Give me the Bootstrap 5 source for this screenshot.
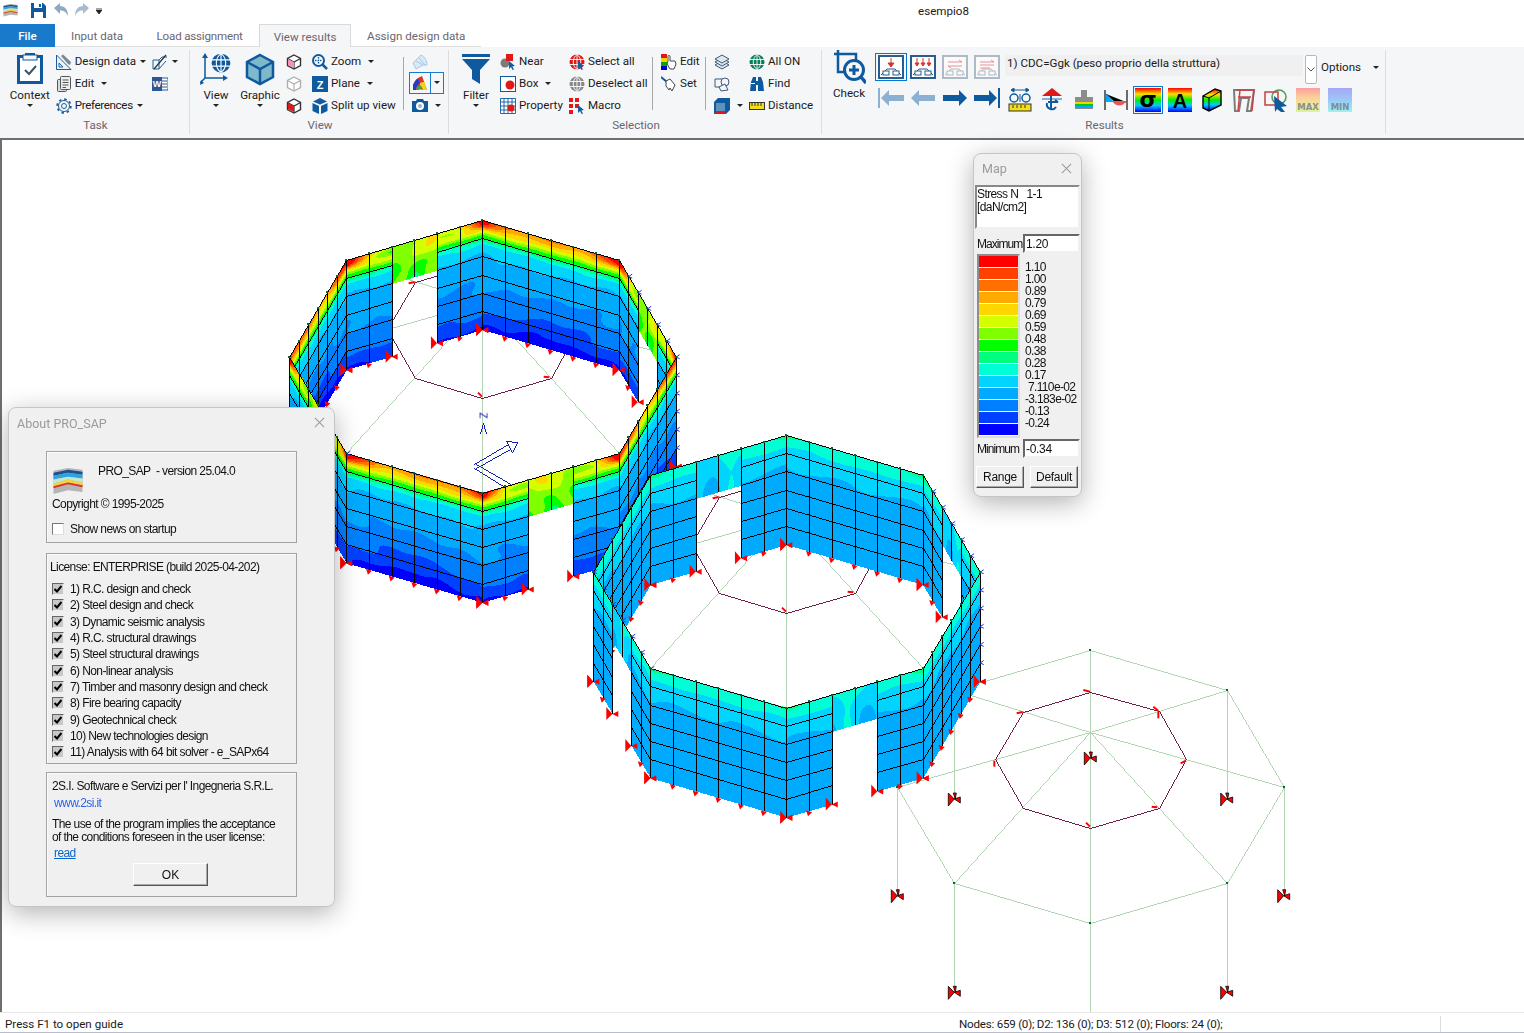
<!DOCTYPE html>
<html lang="en"><head><meta charset="utf-8"><title>esempio8</title>
<link rel="stylesheet" href="https://cdn.jsdelivr.net/npm/bootstrap@5.3.0/dist/css/bootstrap.min.css">
<style>
html,body{height:1033px;overflow:hidden;background:#fff}
body{font-family:Roboto,"Liberation Sans",sans-serif;font-size:11.6px;color:#1a1a1a;line-height:1.2}
svg{display:block;flex-shrink:0}
.app-shell{width:1524px;height:1033px}
.ttl{height:24px}.ttl svg{margin-top:3px}
.ttl-name{left:918px;top:5px}
.qa1{margin-left:3px}.qa2{margin-left:13px}.qa3{margin-left:8px}.qa4{margin-left:7px}.qa5{margin-left:7px}
.qa-d{margin-top:8px!important}
.tabs{height:23px}
.tabx{color:#6d6570;padding:0 16px;border-bottom:1px solid #dfdfdf;line-height:24px}
.tabx.filex{background:#1979ca;color:#fff;width:55px;text-align:center;padding:0;font-weight:500;border:0}
.tabx.activex{background:#f5f6f7;border:1px solid #d8d9da;border-bottom:0;padding:0 13.5px 0 14px}
.tab-i{padding-right:17.5px}
.tab-t{letter-spacing:-.2px}
.ribbon{height:91px;background:#f5f6f7;border-bottom:2px solid #6f6f6f;box-sizing:content-box}
.ribbon .grp{border-right:1px solid #dcdddf;margin:3px 0 4px;height:84px}
.g-task{width:190px}.g-view{width:259px}.g-sel{width:373px}.g-res{width:564px}
.rb{height:66px}
.rl{height:18px;line-height:18px;text-align:center;color:#6d6570;padding-left:2px}
.bigb{display:flex;flex-direction:column;align-items:center}
.bigb>svg{margin-top:2px}
.bigb .cap{height:18px;line-height:18px}
.col-s{display:flex;flex-direction:column}
.it{height:22px;display:flex;align-items:center;gap:3px;white-space:nowrap;padding-top:1px}
.tght{letter-spacing:-.35px}
.car{display:inline-block;width:0;height:0;border-left:3px solid transparent;border-right:3px solid transparent;border-top:3px solid #222;flex-shrink:0}
.it .car{margin-left:1px}
.vs{width:1px;background:#a9a9a9;height:53px;margin-top:7px}
.t1{width:52px;margin-left:4px}.t2{width:97px}.t3{width:37px}
.v1{width:44px;margin-left:4px}.v2{width:44px}.v3{margin-left:4px;width:16px}.v4{margin-left:10px;width:91px}.v5{margin-left:5px}
.s1{width:44px;margin-left:5px}.s2{width:69px;margin-left:2px}.s3{width:83px}.s4{width:44px;margin-left:8px}.s5{width:35px;margin-left:8px}.s6{width:70px}
.r1{width:40px;margin-left:7px}.r1 svg{margin-top:0}.r2{margin-left:6px;width:124px}
.r2x{display:grid;grid-template-columns:repeat(4,32px);grid-template-rows:33px 30px;align-items:center;justify-items:center}
.r3{margin-left:6px;width:380px}
.cbrow{height:38px}
.cbx{width:298px;height:21px;background:#f0f0f0;margin-top:5px;padding-left:2px;line-height:17px;flex-shrink:0;white-space:nowrap}
.cbd{width:12px;height:29px;margin:5px 0 0 2px;background:#fff;border:1px solid #b8b8b8;border-radius:2px;flex-shrink:0}
.opt{margin:11px 0 0 4px;white-space:nowrap}
.opt .car{margin-left:12px;vertical-align:2px}
.toolsx{display:grid;grid-template-columns:repeat(11,32px);justify-items:center;margin-left:-1px}
.sel-b{outline:1px solid #0078d7;outline-offset:1px}
.pickb{border:1px solid #1979ca;height:22px;width:35px;display:flex;align-items:center}
.pickb svg{margin-left:2px}.pickb i{display:block;border-left:1px solid #1979ca;height:20px;margin-left:2px;width:14px;position:relative}
.pickb .car{position:absolute;left:3px;top:8px}
.ml3x{margin-left:3px}
.it .carw{margin-left:4px}
.work{height:872px;border-left:2px solid #6f6f6f}
#plot{display:block}
.zmark{left:478px;top:270px;font:10px "Liberation Sans",sans-serif;color:#00a;transform:rotate(90deg)}
.stat{height:21px;border-top:1px solid #e8e8e8;padding-left:5px;line-height:22px;border-bottom:1px solid #b9bccb}
.stat-l{width:954px}
.stat-n{letter-spacing:-.23px}
.stat-d{left:1440px;top:3px;width:1px;height:16px;background:#dcdcdc}
.dlg{background:#f0f0f0;border:1px solid #c5c5c5;border-radius:8px;box-shadow:0 6px 26px rgba(0,0,0,.3);font-family:"Liberation Sans",sans-serif;font-size:12px;line-height:14px;color:#111;letter-spacing:-.6px;white-space:nowrap}
.dlg-ttl{color:#9a9a9a;font-family:Roboto,sans-serif;letter-spacing:0}
.dlg-x{right:9px;top:9px}
.about{left:6px;top:267px;width:327px;height:500px;padding:43px 0 0 37px}
.about .dlg-ttl{left:8px;top:9px;font-size:12.5px}
.gbx{width:251px;border:1px solid #a3a3a3;box-shadow:inset 1px 1px 0 #fbfbfb;padding-left:5px}
.gb1{height:92px;padding-top:14px}.gb2{height:211px;margin-top:10px;padding:6px 0 0 3px}.gb3{height:125px;margin-top:8px;padding-top:6px}
.ab-row{height:29px}.ab-ver{margin:-2px 0 0 14px}.mt2x{margin-top:2px}
.news{margin-top:11px;display:flex;align-items:center;gap:6px}
.bxck{width:12px;height:12px;background:#fff;border:1px solid;border-color:#777 #ddd #ddd #777}
.lrows{margin-top:7px;margin-left:2px}
.lrow{height:16.3px;display:flex;align-items:center;gap:6px}
.ckg{width:12px;height:12px;background:#c8c8c8;border:1px solid;border-color:#666 #eee #eee #666;position:relative}
.ckg svg{position:absolute;left:1px;top:1px}
.lnk{color:#2b62e0;margin-left:2px;margin-top:3px}.lnk2{color:#0a66cc;text-decoration:underline;margin-left:2px}
.mt7x{margin-top:8px;line-height:13px}
.okb{display:block;width:75px;height:23px;margin:3px 0 0 81px;padding:0;font:12px/20px "Liberation Sans",sans-serif;color:#111;background:#f0f0f0;border:1px solid;border-color:#fff #555 #555 #fff;box-shadow:inset -1px -1px 0 #aaa;border-radius:0;text-align:center}
.okb:hover{background:#f0f0f0;color:#111;border-color:#fff #555 #555 #fff}
.mapd{left:971px;top:13px;width:109px;height:344px;padding:31px 0 0 1px}
.mapd .dlg-ttl{left:8px;top:8px;font-size:12.5px}
.stress{width:105px;height:44px;background:#fff;border:2px solid;border-color:#888 #f0f0f0 #f0f0f0 #888;padding:1px 0 0 0;line-height:13px}
.mrow{display:flex;align-items:center;height:19px;margin-top:5px;padding-left:2px}
.mrow label{width:46px;letter-spacing:-.95px}
.minput{width:57px;height:19px;background:#fff;border:2px solid;border-color:#666 #f0f0f0 #f0f0f0 #666;border-radius:0;padding:0 0 0 1px;font:12px/15px "Liberation Sans",sans-serif;color:#111;box-shadow:none;letter-spacing:-.3px}
.legendx{height:184px;margin-top:1px;padding-left:2px}
.lbar{width:43px;height:184px;border:2px solid #8d8d8d;border-right-color:#ddd;border-bottom-color:#ddd;background:#fff}
.swt{height:12px;border-bottom:1px solid #fff}
.sw1{background:#f00}.sw2{background:#ff4000}.sw3{background:#ff7000}.sw4{background:#ffaa00}.sw5{background:#ffd700}.sw6{background:#d4ff00}.sw7{background:#7fff00}.sw8{background:#0f0}.sw9{background:#00ff7f}.sw10{background:#00ffd4}.sw11{background:#00d4ff}.sw12{background:#0af}.sw13{background:#0080ff}.sw14{background:#0040ff}.sw15{background:#00f}
.lvals{margin-left:5px;padding-top:7px;line-height:12px;letter-spacing:-.65px}
.ind3{padding-left:3px}
.mbtns{margin-top:8px;padding-left:1px;gap:6px}
.mbtn{display:block;width:48px;height:22px;padding:0;font:12px/18px "Liberation Sans",sans-serif;color:#111;background:#f0f0f0;border:1px solid;border-color:#fff #555 #555 #fff;box-shadow:inset -1px -1px 0 #aaa;border-radius:0;letter-spacing:-.3px}
.m2x{margin-top:1px}
</style></head>
<body>
<svg width="0" height="0" class="position-absolute">
<defs>
<linearGradient id="rb" x1="0" y1="0" x2="0" y2="1"><stop offset="0" stop-color="#f00"/><stop offset=".25" stop-color="#fd0"/><stop offset=".5" stop-color="#0e0"/><stop offset=".72" stop-color="#0cf"/><stop offset="1" stop-color="#00f"/></linearGradient>
<linearGradient id="mx" x1="0" y1="0" x2="0" y2="1"><stop offset="0" stop-color="#f9a0a0"/><stop offset=".4" stop-color="#fbd09a"/><stop offset=".7" stop-color="#eee79c"/><stop offset="1" stop-color="#d6f59a"/></linearGradient>
<linearGradient id="mn" x1="0" y1="0" x2="0" y2="1"><stop offset="0" stop-color="#a7a7f8"/><stop offset=".5" stop-color="#9cc7f6"/><stop offset="1" stop-color="#9cf3ec"/></linearGradient>
<symbol id="logo" viewBox="0 0 32 30"><path d="M1 5 16 2 31 4V27L16 25 1 29z" fill="#b5b5b5"/><path d="M1 7 16 4 31 6V9L16 7 1 10z" fill="#1d4f94"/><path d="M1 10 16 7 31 9V13L16 11 1 14z" fill="#2ea3dc"/><path d="M1 14 16 11 31 13V17L16 14 1 18z" fill="#bfe6d8"/><path d="M1 18 16 14 31 17V20L16 17 1 21z" fill="#f6d33c"/><path d="M1 21 16 17 31 20V22L16 19 1 23z" fill="#d9342a"/></symbol>
<symbol id="glasses" viewBox="0 0 26 24"><rect x="1" y="1" width="24" height="22" fill="#fff" stroke="currentColor" stroke-width="2"/><path d="M3 20 9 14H17L23 20" fill="none" stroke="currentColor"/><rect x="5" y="16" width="6" height="4" fill="#fff" stroke="currentColor"/><rect x="15" y="16" width="6" height="4" fill="#fff" stroke="currentColor"/></symbol>
<symbol id="cube" viewBox="0 0 16 16"><path d="M8 1 14.5 4.5V11.5L8 15 1.5 11.5V4.5z" fill="#fff" stroke="currentColor" stroke-width="1.4"/><path d="M1.5 4.5 8 8 14.5 4.5M8 8V15" fill="none" stroke="currentColor" stroke-width="1.2"/></symbol>
<symbol id="globe" viewBox="0 0 16 16"><circle cx="8" cy="8" r="7.5" fill="currentColor"/><path d="M.5 5.5H15.5M.5 10.5H15.5M8 .5V15.5M8 .5C3 4 3 12 8 15.5M8 .5C13 4 13 12 8 15.5" fill="none" stroke="#fff" stroke-width=".9"/></symbol>
<symbol id="cursor" viewBox="0 0 16 16"><path d="M9 7 15 12 12.3 12.5 14 15.4 12.6 16 11 13 9 15z" fill="#135c9e"/></symbol>
<symbol id="ck" viewBox="0 0 8 8"><path d="M.5 4 3 6.5 7.5 1" fill="none" stroke="#000" stroke-width="2"/></symbol>
<symbol id="xx" viewBox="0 0 12 12"><path d="M1 1 11 11M11 1 1 11" stroke="#9a9a9a" stroke-width="1.1"/></symbol>
</defs></svg>
<div class="app-shell d-flex flex-column">
 <div class="ttl d-flex position-relative">
  <svg class="qa1" width="15" height="14"><use href="#logo"/></svg>
  <svg class="qa2" width="15" height="15" viewBox="0 0 15 15"><path d="M0 0H12L15 3V15H0z" fill="#0f5a9e"/><rect x="3" y="0" width="8" height="5" fill="#fff"/><rect x="8" y="1" width="2" height="3" fill="#0f5a9e"/><rect x="3" y="9" width="9" height="6" fill="#fff"/></svg>
  <svg class="qa3" width="14" height="14" viewBox="0 0 14 14"><path d="M0 5 6 0V3C11 3 14 7 14 13 12 9 10 7.500 6 7.500V11z" fill="#8fa9c4"/></svg>
  <svg class="qa4" width="14" height="14" viewBox="0 0 14 14"><path d="M14 5 8 0V3C3 3 0 7 0 13 2 9 4 7.500 8 7.500V11z" fill="#a9bccf"/></svg>
  <svg class="qa5 qa-d" width="6" height="6" viewBox="0 0 6 6"><path d="M0 0H6M0 2H6L3 6z" stroke="#222" stroke-width=".8" fill="#222"/></svg>
  <span class="ttl-name position-absolute">esempio8</span>
 </div>
 <div class="tabs d-flex">
  <div class="tabx filex">File</div><div class="tabx tab-i">Input data</div><div class="tabx tab-t">Load assignment</div><div class="tabx activex">View results</div><div class="tabx">Assign design data</div>
 </div>
 <div class="ribbon d-flex">
  <!-- TASK -->
  <div class="grp g-task">
   <div class="rb d-flex">
    <div class="bigb t1"><svg width="30" height="34" viewBox="0 0 30 34"><path d="M10 3V1H20V3H28V32H2V3z" fill="#0f5a9e"/><rect x="5" y="6" width="20" height="23" fill="#fff"/><rect x="8" y="3" width="14" height="5" fill="#f5f6f7" stroke="#0f5a9e"/><path d="M10 18 14 22 21 14" fill="none" stroke="#3a5568" stroke-width="2"/></svg><span class="cap">Context</span><i class="car"></i></div>
    <div class="col-s t2">
     <div class="it"><svg width="16" height="16" viewBox="0 0 16 16"><path d="M.5 1V15.500H15z" fill="#eef2f6" stroke="#1b5e9b"/><path d="M3 9V13H7z" fill="#f5f6f7" stroke="#1b5e9b"/><path d="M5 2 7 .5 15 8 14 11 12 10z" fill="#7b8792"/></svg>Design data<i class="car"></i></div>
     <div class="it"><svg width="16" height="16" viewBox="0 0 16 16"><rect x="1.500" y="3.500" width="9" height="12" rx="1" fill="#d8dcdf" stroke="#555"/><rect x="4.500" y=".5" width="10" height="13" rx="1" fill="#eee" stroke="#555"/><path d="M6.500 4H12.500M6.500 6.500H12.500M6.500 9H12.500M6.500 11.500H10" stroke="#555"/></svg>Edit<i class="car carw"></i></div>
     <div class="it tght"><svg width="16" height="16" viewBox="0 0 16 16"><circle cx="8" cy="8" r="5.500" fill="none" stroke="#1b5e9b"/><circle cx="8" cy="8" r="6.800" fill="none" stroke="#1b5e9b" stroke-width="1.800" stroke-dasharray="2.500 2.840"/><circle cx="8" cy="8" r="2.500" fill="none" stroke="#1b5e9b"/></svg>Preferences<i class="car"></i></div>
    </div>
    <div class="col-s t3">
     <div class="it"><svg width="16" height="16" viewBox="0 0 16 16"><path d="M1 6H7V15H1zM7 6 10 3H15M7 15 14 7" fill="none" stroke="#1b5e9b"/><path d="M2 15 14 1" stroke="#333" stroke-width="1.300"/></svg><i class="car ml3x"></i></div>
     <div class="it"><svg width="16" height="16" viewBox="0 0 16 16"><rect x="8" y="2" width="8" height="12" fill="#fff" stroke="#2b5797"/><path d="M10 5H15M10 8H15M10 11H15" stroke="#2b5797"/><rect y="1" width="10" height="14" fill="#2b5797"/><text x="5" y="11" text-anchor="middle" font-size="9" font-weight="700" fill="#fff" font-family="Liberation Sans">W</text></svg></div>
    </div>
   </div>
   <div class="rl">Task</div>
  </div>
  <!-- VIEW -->
  <div class="grp g-view">
   <div class="rb d-flex">
    <div class="bigb v1"><svg width="32" height="34" viewBox="0 0 32 34"><path d="M5 26V4M5 26H26M5 26 0 31" fill="none" stroke="#0f5a9e" stroke-width="1.500"/><path d="M5 1 8 6H2zM28 26 23 23V29zM0 33 1 28 4 31z" fill="#0f5a9e"/><svg x="11" y="1" width="20" height="20" viewBox="0 0 16 16" color="#0f5a9e"><use href="#globe"/></svg></svg><span class="cap">View</span><i class="car"></i></div>
    <div class="bigb v2"><svg width="30" height="34" viewBox="0 0 30 34"><path d="M15 3 28 10V25L15 32 2 25V10z" fill="#7fb8ca" stroke="#0f5a9e" stroke-width="2.500"/><path d="M2 10 15 17 28 10M15 17V32" fill="none" stroke="#0f5a9e" stroke-width="2.500"/></svg><span class="cap">Graphic</span><i class="car"></i></div>
    <div class="col-s v3">
     <div class="it"><svg width="16" height="16" viewBox="0 0 16 16" color="#333"><use href="#cube"/><path d="M2 5 8 8V14L2 11z" fill="#f48fc0"/></svg></div>
     <div class="it"><svg width="16" height="16" viewBox="0 0 16 16" color="#b0b0b0"><use href="#cube"/></svg></div>
     <div class="it"><svg width="16" height="16" viewBox="0 0 16 16" color="#333"><use href="#cube"/><path d="M2 5 8 8V14L2 11z" fill="#e01818"/></svg></div>
    </div>
    <div class="col-s v4">
     <div class="it"><svg width="16" height="16" viewBox="0 0 16 16"><circle cx="6.500" cy="6.500" r="5.500" fill="#fff" stroke="#0f5a9e" stroke-width="2"/><path d="M6.500 3V10M3 6.500H10" stroke="#0f5a9e" stroke-width="1.500" stroke-dasharray="1.500 1"/><path d="M10.500 10.500 15 15" stroke="#0f5a9e" stroke-width="2.500"/></svg>Zoom<i class="car carw"></i></div>
     <div class="it"><svg width="16" height="16" viewBox="0 0 16 16"><rect width="16" height="16" fill="#0f5a9e"/><text x="8" y="12.500" text-anchor="middle" font-size="11" font-weight="700" fill="#fff" font-family="Liberation Sans">Z</text></svg>Plane<i class="car carw"></i></div>
     <div class="it"><svg width="16" height="16" viewBox="0 0 16 16"><path d="M8 0 15 3.500 8 6.500 1 3.500z" fill="#0f5a9e"/><path d="M.5 5 7 8V16L.5 13zM15.500 5 9 8V16L15.500 13z" fill="#0f5a9e"/></svg>Split up view</div>
    </div>
    <div class="vs"></div>
    <div class="col-s v5">
     <div class="it ml3x"><svg width="16" height="16" viewBox="0 0 16 16"><path d="M1 9 9 1C13 3 15 7 15 11H11L4 15z" fill="#dbe9f5" stroke="#a6c8e6"/><path d="M4 7 11 11M7 4 13 11" stroke="#a6c8e6"/></svg></div>
     <div class="pickb"><svg width="16" height="16" viewBox="0 0 16 16"><path d="M1 10A14 14 0 0 1 10 1L15 15H11A6 6 0 0 0 5 15H1z" fill="#d9342a"/><path d="M1 10A14 14 0 0 1 6 3.400L8 8A8 8 0 0 0 4 15H1z" fill="#1c3fd0"/><path d="M8 8A8 8 0 0 1 12.500 7L15 15H11A6 6 0 0 0 8 11z" fill="#f3d21e"/><path d="M5 12 8 10 10 12 7 15H4z" fill="#2fae4a"/></svg><i><span class="car"></span></i></div>
     <div class="it ml3x"><svg width="16" height="16" viewBox="0 0 16 16"><path d="M0 3H4L5 1H11L12 3H16V14H0z" fill="#0f5a9e"/><circle cx="8" cy="8" r="4" fill="#fff"/><circle cx="8" cy="8" r="2" fill="#9fb6c9"/></svg><i class="car carw"></i></div>
    </div>
   </div>
   <div class="rl">View</div>
  </div>
  <!-- SELECTION -->
  <div class="grp g-sel">
   <div class="rb d-flex">
    <div class="bigb s1"><svg width="28" height="34" viewBox="0 0 28 34"><rect y="2" width="28" height="3" fill="#0f5a9e"/><path d="M0 7H28L18 18V32L10 27V18z" fill="#0f5a9e"/></svg><span class="cap">Filter</span><i class="car"></i></div>
    <div class="col-s s2">
     <div class="it"><svg width="16" height="16" viewBox="0 0 16 16"><circle cx="5" cy="9" r="4.500" fill="#7b7b7b"/><rect x="6" y="0" width="7" height="7" fill="#e01818"/><use href="#cursor"/></svg>Near</div>
     <div class="it"><svg width="16" height="16" viewBox="0 0 16 16"><rect x=".5" y=".5" width="15" height="15" fill="#fff" stroke="#0f5a9e"/><circle cx="10" cy="9" r="4.500" fill="#e01818"/></svg>Box<i class="car carw"></i></div>
     <div class="it"><svg width="16" height="16" viewBox="0 0 16 16"><path d="M.5.5H15.500V15.500H.5zM.5 4H15.500M.5 8H15.500M.5 12H15.500M4 .5V15.500M8 .5V15.500M12 .5V15.500" fill="#fff" stroke="#0f5a9e" stroke-width=".9"/><circle cx="11" cy="10" r="3.500" fill="#e01818"/></svg>Property</div>
    </div>
    <div class="col-s s3">
     <div class="it"><svg width="16" height="16" viewBox="0 0 16 16" color="#e01818"><use href="#globe"/><use href="#cursor"/></svg>Select all</div>
     <div class="it"><svg width="16" height="16" viewBox="0 0 16 16" color="#888"><use href="#globe"/></svg>Deselect all</div>
     <div class="it"><svg width="16" height="16" viewBox="0 0 16 16"><path d="M0 0H4V4H0zM6 0H10V4H6zM0 6H4V10H0zM0 12H4V16H0zM6 6H10V10H6z" fill="#e01818"/><use href="#cursor"/></svg>Macro</div>
    </div>
    <div class="vs"></div>
    <div class="col-s s4">
     <div class="it"><svg width="16" height="16" viewBox="0 0 16 16"><rect y="0" width="6" height="4" fill="#e01818"/><rect y="4" width="6" height="4" fill="#f5d300"/><rect y="8" width="6" height="4" fill="#0a0"/><rect y="12" width="6" height="4" fill="#00c"/><path d="M7 7V2.500A1 1 0 0 1 9 2.500V7H14L15 10 13 15H9L6 10z" fill="#fff" stroke="#333" stroke-width=".9"/></svg>Edit</div>
     <div class="it"><svg width="16" height="16" viewBox="0 0 16 16"><path d="M0 1 6 6" stroke="#0f5a9e" stroke-width="2"/><path d="M5 5 9 3 14 9 11 15 9 12 8 14 5 10z" fill="#fff" stroke="#444"/></svg>Set</div>
    </div>
    <div class="vs"></div>
    <div class="col-s s5">
     <div class="it"><svg width="16" height="16" viewBox="0 0 16 16"><g fill="#dfe7ee" stroke="#3a5a78"><path d="M8 7 15 11 8 15 1 11z"/><path d="M8 4 15 8 8 12 1 8z"/><path d="M8 1 15 5 8 9 1 5z"/></g></svg></div>
     <div class="it"><svg width="16" height="16" viewBox="0 0 16 16"><g fill="#f5f6f7" stroke="#3a5a78"><path d="M1 3H9V11H1z"/><circle cx="11" cy="6" r="4"/><path d="M5 11 11 8 14 14 7 15z"/></g></svg></div>
     <div class="it"><svg width="16" height="16" viewBox="0 0 16 16"><path d="M0 4 4 0H16V12L12 16H0z" fill="#0f5a9e"/><path d="M2 5H11V14H2z" fill="#5c93bd"/><path d="M0 16 2 13H12L11 16z" fill="#e01818"/></svg><i class="car carw"></i></div>
    </div>
    <div class="col-s s6">
     <div class="it"><svg width="16" height="16" viewBox="0 0 16 16" color="#0b7c5c"><use href="#globe"/></svg>All ON</div>
     <div class="it"><svg width="16" height="16" viewBox="0 0 16 16"><path d="M1 15 2 6 4 1H7V15zM15 15 14 6 12 1H9V15z" fill="#0f5a9e"/><rect x="7" y="5" width="2" height="4" fill="#0f5a9e"/><rect x="2" y="7" width="4" height="1" fill="#fff"/></svg>Find</div>
     <div class="it"><svg width="16" height="16" viewBox="0 0 16 16"><rect x=".5" y="4.500" width="15" height="7" fill="#f2df1a" stroke="#333"/><path d="M3 5V8M6 5V8M9 5V8M12 5V8" stroke="#333"/></svg>Distance</div>
    </div>
   </div>
   <div class="rl">Selection</div>
  </div>
  <!-- RESULTS -->
  <div class="grp g-res">
   <div class="rb d-flex">
    <div class="bigb r1"><svg width="34" height="34" viewBox="0 0 34 34"><path d="M6 0V22H24M2 4H24V12" fill="none" stroke="#0f5a9e" stroke-width="2.500"/><circle cx="22" cy="20" r="9.500" fill="#f5f6f7" stroke="#0f5a9e" stroke-width="3"/><path d="M29 27 34 33" stroke="#0f5a9e" stroke-width="3.500"/><path d="M22 15V25M17 20H27" stroke="#0f5a9e" stroke-width="3"/></svg><span class="cap">Check</span></div>
    <div class="r2 r2x">
     <div class="sel-b"><svg width="28" height="24" viewBox="0 0 26 24" color="#2b5d8c"><use href="#glasses"/><path d="M13 3V9M10 8H16L13 12z" stroke="#d9342a" fill="#d9342a"/></svg></div>
     <svg width="26" height="24" viewBox="0 0 26 24" color="#2b5d8c"><use href="#glasses"/><path d="M7 3V8M13 3V8M19 3V8M5 8H9L7 11zM11 8H15L13 11zM17 8H21L19 11z" stroke="#d9342a" fill="#d9342a"/></svg>
     <svg class="opacity-50" width="26" height="24" viewBox="0 0 26 24" color="#6a7f93"><use href="#glasses"/><path d="M6 7H20M20 7 17 5M6 11H20M6 11 9 13" stroke="#d9342a" fill="none"/></svg>
     <svg class="opacity-50" width="26" height="24" viewBox="0 0 26 24" color="#6a7f93"><use href="#glasses"/><path d="M6 7H20M6 10H20M6 13H16M20 7 17 5" stroke="#d9342a" fill="none"/></svg>
     <svg width="26" height="20" viewBox="0 0 26 20"><path d="M0 0H2V20H0zM3 10 11 2V7H26V13H11V18z" fill="#8bb0d3"/></svg>
     <svg width="26" height="20" viewBox="0 0 26 20"><path d="M1 10 9 2V7H25V13H9V18z" fill="#8bb0d3"/></svg>
     <svg width="26" height="20" viewBox="0 0 26 20"><path d="M25 10 17 2V7H1V13H17V18z" fill="#0f5a9e"/></svg>
     <svg width="26" height="20" viewBox="0 0 26 20"><path d="M24 0H26V20H24zM23 10 15 2V7H0V13H15V18z" fill="#0f5a9e"/></svg>
    </div>
    <div class="r3">
     <div class="cbrow d-flex">
      <div class="cbx">1) CDC=Ggk (peso proprio della struttura)</div>
      <div class="cbd d-flex align-items-center justify-content-center"><svg width="8" height="5" viewBox="0 0 8 5"><path d="M.5 .5 4 4 7.500 .5" fill="none" stroke="#555"/></svg></div>
      <div class="opt">Options<i class="car"></i></div>
     </div>
     <div class="toolsx">
      <svg width="24" height="24" viewBox="0 0 24 24"><path d="M3 2H21M3 2 6 0V4zM21 2 18 0V4z" stroke="#0f5a9e" fill="#0f5a9e"/><circle cx="6" cy="10" r="4" fill="none" stroke="#0f5a9e" stroke-width="1.500"/><circle cx="18" cy="10" r="4" fill="none" stroke="#0f5a9e" stroke-width="1.500"/><path d="M12 6V14" stroke="#0f5a9e"/><rect x="1" y="16" width="22" height="7" fill="#f2df1a" stroke="#333"/><path d="M5 17V20M9 17V20M13 17V20M17 17V20" stroke="#333"/></svg>
      <svg width="24" height="24" viewBox="0 0 24 24"><path d="M2 8 12 0 22 8z" fill="#e01818"/><path d="M2 11H22" stroke="#8bb0d3" stroke-width="2"/><path d="M11 8V20M8 14H18M18 14 15 12" stroke="#0f5a9e" stroke-width="2" fill="none"/><path d="M7 15A5 5 0 0 0 16 19" stroke="#0f5a9e" stroke-width="2" fill="none"/></svg>
      <svg width="24" height="24" viewBox="0 0 24 24"><path d="M9 2H15V9H21V21H3V9H9z" fill="#8d8d8d"/><rect x="3" y="14" width="18" height="2" fill="#f5d300"/><rect x="3" y="16" width="18" height="2" fill="#0c0"/><rect x="3" y="18" width="18" height="2" fill="#0af"/></svg>
      <svg width="24" height="24" viewBox="0 0 24 24"><path d="M1 2V22M23 2V22" stroke="#6a6a6a" stroke-width="2"/><path d="M2 6 11 14H22" stroke="#333"/><path d="M2 6 10 14H2z" fill="#0af"/><path d="M8 13H22C19 19 12 19 8 13z" fill="#e8565a"/></svg>
      <svg class="sel-b" width="26" height="24" viewBox="0 0 26 24"><rect width="26" height="24" fill="url(#rb)"/><text x="13" y="19" text-anchor="middle" font-size="22" font-weight="700" fill="#000" font-family="DejaVu Sans">σ</text></svg>
      <svg width="24" height="24" viewBox="0 0 24 24"><rect width="24" height="24" fill="url(#rb)"/><text x="12" y="20" text-anchor="middle" font-size="20" font-weight="700" fill="#000" font-family="Liberation Sans">A</text></svg>
      <svg width="20" height="24" viewBox="0 0 20 24"><path d="M1 8 13 1 19 3V17L7 23 1 20z" fill="url(#rb)" stroke="#000" stroke-width="1.400"/><path d="M1 8 7 10V23M7 10 19 3" fill="none" stroke="#000"/></svg>
      <svg width="22" height="24" viewBox="0 0 22 24"><path d="M1 2H21L18 23H14L16 10H8L6 23H2z" fill="none" stroke="#7d7d7d" stroke-width="2"/><path d="M4 2H21L19 23M7 2 5 23M5 9H18" fill="none" stroke="#d04242" stroke-width="1.500"/></svg>
      <svg width="24" height="24" viewBox="0 0 24 24"><circle cx="15" cy="9" r="7" fill="none" stroke="#4c9a5a" stroke-width="1.500"/><rect x="1" y="4" width="13" height="13" fill="none" stroke="#c34040" stroke-width="1.500"/><path d="M10 8 23 18 17 19 21 24 17 24 13 21 11 24z" fill="#0f5a9e"/></svg>
      <svg width="24" height="24" viewBox="0 0 24 24"><rect width="24" height="24" fill="url(#mx)"/><text x="12" y="22" text-anchor="middle" font-size="8.500" font-weight="700" fill="#8d8d8d" font-family="DejaVu Sans">MAX</text></svg>
      <svg width="24" height="24" viewBox="0 0 24 24"><rect width="24" height="24" fill="url(#mn)"/><text x="12" y="22" text-anchor="middle" font-size="8.500" font-weight="700" fill="#7d8d99" font-family="DejaVu Sans">MIN</text></svg>
     </div>
    </div>
   </div>
   <div class="rl">Results</div>
  </div>
 </div>
 <div class="work position-relative">
  <canvas id="plot" width="1522" height="872"></canvas>
  <span class="zmark position-absolute">Z</span>
  <div class="dlg mapd position-absolute">
   <span class="dlg-ttl position-absolute">Map</span><svg class="dlg-x position-absolute" width="11" height="11"><use href="#xx"/></svg>
   <div class="stress">Stress N&nbsp;&nbsp; 1-1<br>[daN/cm2]</div>
   <div class="mrow"><label>Maximum</label><input class="minput form-control" value="1.20"></div>
   <div class="legendx d-flex">
    <div class="lbar"><div class="swt sw1"></div><div class="swt sw2"></div><div class="swt sw3"></div><div class="swt sw4"></div><div class="swt sw5"></div><div class="swt sw6"></div><div class="swt sw7"></div><div class="swt sw8"></div><div class="swt sw9"></div><div class="swt sw10"></div><div class="swt sw11"></div><div class="swt sw12"></div><div class="swt sw13"></div><div class="swt sw14"></div><div class="swt sw15"></div></div>
    <div class="lvals"><div>1.10</div><div>1.00</div><div>0.89</div><div>0.79</div><div>0.69</div><div>0.59</div><div>0.48</div><div>0.38</div><div>0.28</div><div>0.17</div><div class="ind3">7.110e-02</div><div>-3.183e-02</div><div>-0.13</div><div>-0.24</div></div>
   </div>
   <div class="mrow m2x"><label>Minimum</label><input class="minput form-control" value="-0.34"></div>
   <div class="mbtns d-flex"><button class="btn mbtn">Range</button><button class="btn mbtn">Default</button></div>
  </div>
  <div class="dlg about position-absolute">
   <span class="dlg-ttl position-absolute">About PRO_SAP</span><svg class="dlg-x position-absolute" width="11" height="11"><use href="#xx"/></svg>
   <div class="gbx gb1">
    <div class="ab-row d-flex"><svg width="32" height="29"><use href="#logo"/></svg><span class="ab-ver">PRO_SAP&nbsp; - version 25.04.0</span></div>
    <div class="mt2x">Copyright © 1995-2025</div>
    <div class="news"><span class="bxck"></span>Show news on startup</div>
   </div>
   <div class="gbx gb2">
    <div>License: ENTERPRISE (build 2025-04-202)</div>
    <div class="lrows">
     <div class="lrow"><span class="ckg"><svg width="8" height="8"><use href="#ck"/></svg></span>1) R.C. design and check</div>
     <div class="lrow"><span class="ckg"><svg width="8" height="8"><use href="#ck"/></svg></span>2) Steel design and check</div>
     <div class="lrow"><span class="ckg"><svg width="8" height="8"><use href="#ck"/></svg></span>3) Dynamic seismic analysis</div>
     <div class="lrow"><span class="ckg"><svg width="8" height="8"><use href="#ck"/></svg></span>4) R.C. structural drawings</div>
     <div class="lrow"><span class="ckg"><svg width="8" height="8"><use href="#ck"/></svg></span>5) Steel structural drawings</div>
     <div class="lrow"><span class="ckg"><svg width="8" height="8"><use href="#ck"/></svg></span>6) Non-linear analysis</div>
     <div class="lrow"><span class="ckg"><svg width="8" height="8"><use href="#ck"/></svg></span>7) Timber and masonry design and check</div>
     <div class="lrow"><span class="ckg"><svg width="8" height="8"><use href="#ck"/></svg></span>8) Fire bearing capacity</div>
     <div class="lrow"><span class="ckg"><svg width="8" height="8"><use href="#ck"/></svg></span>9) Geotechnical check</div>
     <div class="lrow"><span class="ckg"><svg width="8" height="8"><use href="#ck"/></svg></span>10) New technologies design</div>
     <div class="lrow"><span class="ckg"><svg width="8" height="8"><use href="#ck"/></svg></span>11) Analysis with 64 bit solver - e_SAPx64</div>
    </div>
   </div>
   <div class="gbx gb3">
    <div>2S.I. Software e Servizi per l' Ingegneria S.R.L.</div>
    <div class="lnk">www.2si.it</div>
    <div class="mt7x">The use of the program implies the acceptance<br>of the conditions foreseen in the user license:</div>
    <div class="lnk2 mt2x">read</div>
    <button class="btn okb">OK</button>
   </div>
  </div>
 </div>
 <div class="stat d-flex position-relative"><div class="stat-l">Press F1 to open guide</div><div class="stat-n">Nodes: 659 (0); D2: 136 (0); D3: 512 (0); Floors: 24 (0);</div><i class="stat-d position-absolute"></i></div>
</div>
<script>
(function(){
const c=document.getElementById('plot').getContext('2d');
c.translate(-2,-140);
function line(x0,y0,x1,y1,col){x0=Math.round(x0);y0=Math.round(y0);x1=Math.round(x1);y1=Math.round(y1);
 c.fillStyle=col;let dx=Math.abs(x1-x0),dy=-Math.abs(y1-y0),sx=x0<x1?1:-1,sy=y0<y1?1:-1,e=dx+dy;
 for(;;){c.fillRect(x0,y0,1,1);if(x0===x1&&y0===y1)break;const e2=2*e;if(e2>=dy){e+=dy;x0+=sx}if(e2<=dx){e+=dx;y0+=sy}}}
function poly(p,fill,stroke){c.beginPath();p.forEach((q,i)=>i?c.lineTo(q[0],q[1]):c.moveTo(q[0],q[1]));c.closePath();c.fillStyle=fill;c.fill();if(stroke){c.strokeStyle=stroke;c.lineWidth=.8;c.stroke()}}
const cm=['#0000ff','#0040ff','#0080ff','#00aaff','#00d4ff','#00ffd4','#00ff7f','#00ff00','#7fff00','#d4ff00','#ffd700','#ffaa00','#ff7000','#ff4000','#ff0000'];
const band=v=>cm[Math.max(0,Math.min(14,Math.floor((v+.34)/.1027)))];
const V=[[482.3,220],[618.7,260],[675.7,356.7],[618.7,453.3],[482.3,492.7],[346.3,453.3],[289.3,356.7],[346.3,260]];
const H=109,RH=H/6;
const lerp=(pts,t)=>{for(let i=1;i<pts.length;i++)if(t<=pts[i][0]){const a=pts[i-1],b=pts[i];return a[1]+(b[1]-a[1])*(t-a[0])/(b[0]-a[0])}return pts[pts.length-1][1]};
function vS1(s,t,door,seed){const col=s*6,e=Math.abs(s-.5)*2,m=.5+.5*Math.sin(col*1.9+seed),
 noise=.022*Math.sin(col*2.3+t*3.1+seed)*Math.cos(t*1.7-col*1.1);
 const top=door?(.55+.14*m+.65*Math.pow(e,3)):(.82+.12*m+.32*e*e);
 if(door&&col>2&&col<4){const b=.42+.14*Math.sin(col*4.3+seed+t*1.6);return lerp([[0,top],[.6,.5+.12*m],[2,b]],t)+2.5*noise}
 const near=door?Math.max(0,1-Math.min(Math.abs(col-2),Math.abs(col-4))):0;
 const d=1-e;
 const bottom=door?[[4,-.05],[5,-.11],[6,-.24]]:[[4,-.05-.05*d],[5,-.12-.07*d],[6,-.25-.08*d]];
 return lerp([[0,top],[.25,top-.12],[.55,.62+.08*e],[.85,.44],[1.05,.3+.05*m-.05*near],[1.3,.17],[1.6,.11],[2,.06],[3,-.005]].concat(bottom),t)+noise;}
function vS2(s,t,door,seed){const col=s*6,e=Math.abs(s-.5)*2,m=.5+.5*Math.sin(col*1.7+seed),
 noise=.012*Math.sin(col*2.1+t*2.3+seed);
 if(door&&col>2&&col<4)return lerp([[0,.14+.06*m],[2,.09+.09*Math.sin(col*3.7+seed)]],t)+noise;
 return lerp([[0,.22+.1*e*e],[.5,.18+.03*m],[1,.12],[1.6,.08],[2.2,.04],[6,.02]],t)+(t<2?noise:0);}
function small(x,y){poly([[x-3,y-1],[x+3,y+1],[x-1,y+5]],'#f00')}
function tick(x,y){c.strokeStyle='#2030e0';c.lineWidth=1;c.beginPath();c.moveTo(x+4,y-2);c.lineTo(x+.5,y+.5);c.lineTo(x+4,y+2);c.stroke()}
function big(x,y){poly([[x-6,y-7],[x,y],[x-6,y+6]],'#f00');poly([[x,y],[x+6,y-3],[x+6,y+3]],'#f00')}
function wall(a,b,door,fn,dx,dy,seed,opt){opt=opt||{};
 const x0=a[0]+dx,y0=a[1]+dy,x1=b[0]+dx,y1=b[1]+dy;
 const P=(s,t)=>[x0+(x1-x0)*s,y0+(y1-y0)*s+t*RH];
 const xa=Math.round(Math.min(x0,x1)),xb=Math.round(Math.max(x0,x1));
 for(let x=xa;x<=xb;x++){const s=Math.max(0,Math.min(1,(x-x0)/(x1-x0))),tp=y0+(y1-y0)*s,col=s*6,isD=door&&col>2&&col<4;
  const yb=tp+(isD?2*RH:H);let run=Math.round(tp),cur=null;
  for(let y=Math.round(tp);y<=Math.round(yb);y++){const cc=band(fn(s,Math.max(0,(y-tp)/RH),door,seed));
   if(cc!==cur){if(cur){c.fillStyle=cur;c.fillRect(x,run,1,y-run)}cur=cc;run=y}}
  c.fillStyle=cur;c.fillRect(x,run,1,Math.round(yb)-run+1)}
 for(let j=0;j<6;j++){ if(door&&j>=1){line(...P(0,j),...P(1/3,j),'#000');line(...P(2/3,j),...P(1,j),'#000')}else line(...P(0,j),...P(1,j),'#000')}
 for(let i=0;i<=6;i++){const s=i/6,isD=door&&i===3;const p=P(s,0),q=P(s,isD?2:6);line(p[0],p[1],q[0],q[1],'#000');
  c.fillStyle='#063';c.fillRect(Math.round(p[0])-1,Math.round(p[1])-1,2,2)}
 for(let i=0;i<=6;i++){if(door&&i===3)continue;const q=P(i/6,6);if(i===0||i===6||(door&&(i===2||i===4)))big(q[0],q[1]+1);else small(q[0],q[1]+1)}
 if(opt.ticks)for(let i=1;i<=6;i++){const p=P(i/6,0);tick(p[0],p[1])}
}
function frame(dx,dy){const green='#b4d5b4',brown='#6e1e4a';
 const O=V.map(p=>[p[0]+dx,p[1]+dy]),C=[482.3+dx,301.7+dy];
 O.forEach((p,i)=>{const q=O[(i+1)%8];line(p[0],p[1],q[0],q[1],green);line(C[0],C[1],p[0],p[1],green)});
 line(O[0][0],O[0][1],O[0][0],Math.min(1012,O[4][1]+H),green);
 [1,2,3,5,6,7].forEach(i=>line(O[i][0],O[i][1],O[i][0],O[i][1]+H,green));
 O.forEach(p=>{c.fillStyle='#063';c.fillRect(Math.round(p[0])-1,Math.round(p[1])-1,2,2)});
 const I=[[1090.3,691.7],[1158.7,710.7],[1185.7,759.3],[1158.7,807.7],[1090.3,827.7],[1022.7,807.7],[995,759.3],[1022.7,711.7]].map(p=>[p[0]-608+dx,p[1]-430+dy]);
 I.forEach((p,i)=>{const q=I[(i+1)%8];line(p[0],p[1],q[0],q[1],brown)});
 const T=[[610,150,630,155],[820,200,835,212],[835,215,835,235],[902,370,918,362],[815,500,832,502],[618,548,630,560],[343,362,343,380],[410,220,428,216]];
 T.forEach(t=>{c.strokeStyle='#f00';c.lineWidth=2;c.beginPath();c.moveTo((t[0]/3+880)-608+dx,(t[1]/3+640)-430+dy);c.lineTo((t[2]/3+880)-608+dx,(t[3]/3+640)-430+dy);c.stroke()});
 return O;}
function columnSupport(x,y){poly([[x-6,y-6],[x,y],[x-6,y+7]],'#f00','#000');poly([[x,y],[x+6,y-2],[x+6,y+4]],'#f00','#000');poly([[x-1,y-6],[x+2,y-6],[x+1,y]],'#f00','#000')}
c.fillStyle='#fff';c.fillRect(0,0,1600,1200);
frame(0,0);frame(304,215);
const O3=frame(608,430);
[1,2,3,5,6,7].forEach(i=>columnSupport(O3[i][0],O3[i][1]+H));
columnSupport(1090.3,758);
function arrow(x0,y0,x1,y1){const col='#1020b0';const a=Math.atan2(y1-y0,x1-x0),n=[-Math.sin(a)*2.5,Math.cos(a)*2.5],d=[Math.cos(a),Math.sin(a)];
 const bx=x1-d[0]*9,by=y1-d[1]*9;
 line(x0+n[0],y0+n[1],bx+n[0],by+n[1],col);line(x0-n[0],y0-n[1],bx-n[0],by-n[1],col);
 line(bx+2.6*n[0],by+2.6*n[1],x1,y1,col);line(bx-2.6*n[0],by-2.6*n[1],x1,y1,col);line(bx+2.6*n[0],by+2.6*n[1],bx-2.6*n[0],by-2.6*n[1],col)}
arrow(475,466,517,442);arrow(475,466,520,493);
line(480,433,483,423,'#1020b0');line(486,433,483,423,'#1020b0');
function structure(fn,dx,dy){
 const W=(i,door,seed,opt)=>wall(V[i],V[(i+1)%8],door,fn,dx,dy,seed,opt);
 W(7,true,1.1);W(0,false,2.4);W(6,false,4.1);W(1,true,.7,{ticks:1});W(5,true,3.1,{ticks:dx>0});W(2,false,5.2);W(3,true,1.9);W(4,false,2.9);
 for(let j=1;j<=5;j++)tick(V[2][0]+dx,V[2][1]+dy+j*RH);
 tick(V[5][0]+dx,V[5][1]+dy);}
structure(vS1,0,0);
structure(vS2,304,215);
})();
</script>
</body></html>
